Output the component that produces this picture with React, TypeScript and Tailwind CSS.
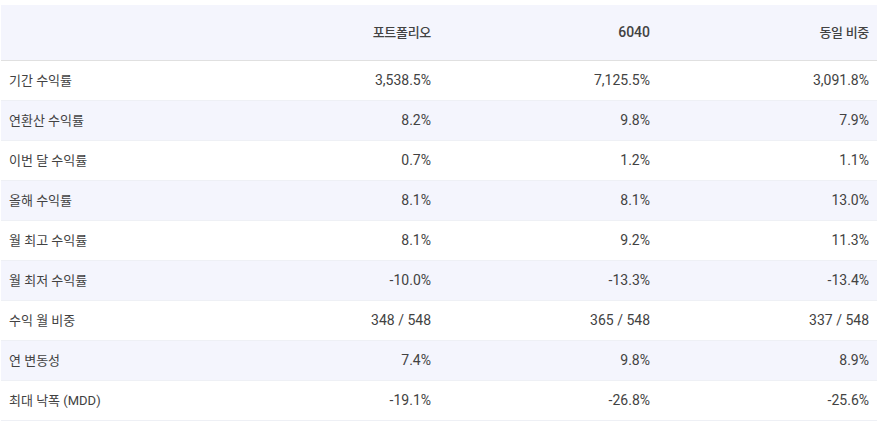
const columns = ['포트폴리오', '6040', '동일 비중'];

const rows: [string, string, string, string][] = [
  ['기간 수익률', '3,538.5%', '7,125.5%', '3,091.8%'],
  ['연환산 수익률', '8.2%', '9.8%', '7.9%'],
  ['이번 달 수익률', '0.7%', '1.2%', '1.1%'],
  ['올해 수익률', '8.1%', '8.1%', '13.0%'],
  ['월 최고 수익률', '8.1%', '9.2%', '11.3%'],
  ['월 최저 수익률', '-10.0%', '-13.3%', '-13.4%'],
  ['수익 월 비중', '348 / 548', '365 / 548', '337 / 548'],
  ['연 변동성', '7.4%', '9.8%', '8.9%'],
  ['최대 낙폭 (MDD)', '-19.1%', '-26.8%', '-25.6%'],
];

export default function App() {
  return (
    <div className="w-[888px] h-[422px] bg-white pt-[5px] pl-px font-['Roboto','Noto_Sans_CJK_KR',sans-serif] text-[14px] text-[#424242]">
      <div className="w-[876px]">
        {/* header */}
        <div className="grid grid-cols-4 h-[56px] items-center bg-[#f4f5fd] border-b border-[#e0e0e0]">
          <div />
          {columns.map((c) => (
            <div
              key={c}
              className={`px-2 text-right font-medium ${c === '6040' ? '' : 'text-[13px] tracking-[-0.3px]'}`}
            >
              {c}
            </div>
          ))}
        </div>

        {rows.map((r, i) => (
          <div
            key={r[0]}
            className={`grid grid-cols-4 h-[40px] items-center border-b border-[#eef0f5] ${
              i % 2 === 1 ? 'bg-[#f4f5fd]' : 'bg-white'
            }`}
          >
            <div className="px-2 text-[13px] pt-px">{r[0]}</div>
            <div className="px-2 text-right">{r[1]}</div>
            <div className="px-2 text-right">{r[2]}</div>
            <div className="px-2 text-right">{r[3]}</div>
          </div>
        ))}
      </div>
    </div>
  );
}
